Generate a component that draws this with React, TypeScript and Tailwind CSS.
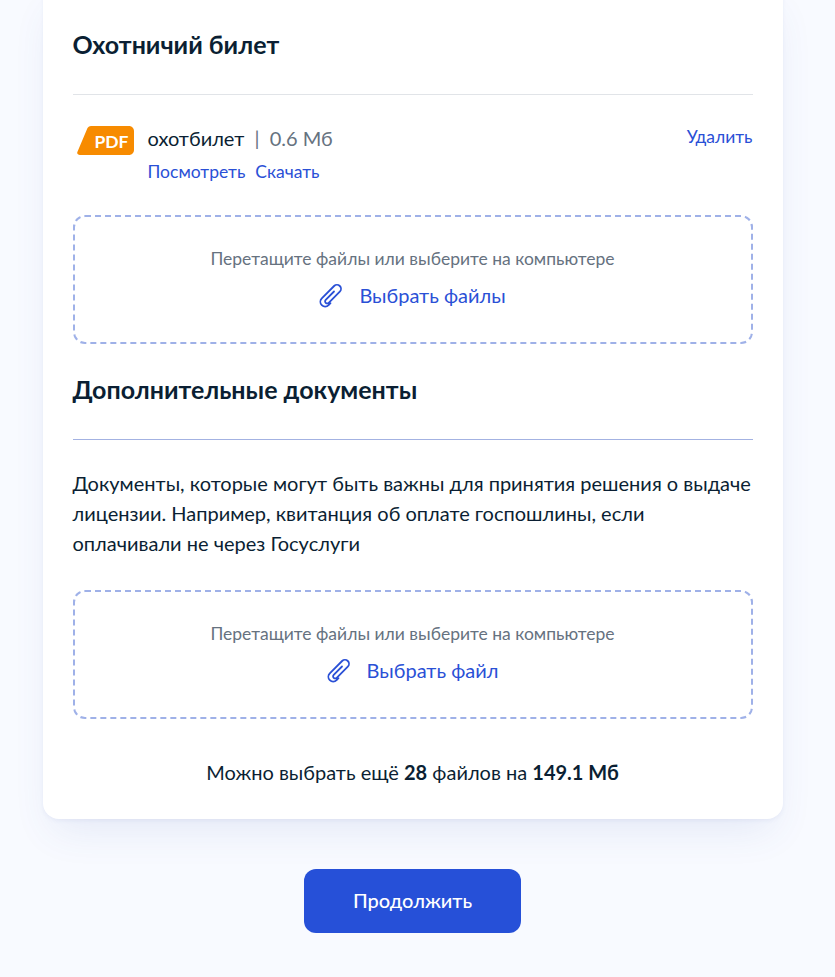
const LATO = "font-['Lato',sans-serif]";

function PaperclipIcon() {
  return (
    <svg width="24" height="25" viewBox="0 0 24 25" fill="none" className="shrink-0">
      <path
        d="M15 8.500 6.700 16.800a2.100 2.100 0 0 0 3 3L20.800 8.700a4 4 0 0 0-5.700-5.700L2.800 15.300a4.800 4.800 0 0 0 6.800 6.800L11.500 20.200"
        stroke="#2a50d6"
        strokeWidth="1.800"
        strokeLinecap="round"
        strokeLinejoin="round"
      />
    </svg>
  );
}

function PdfBadge() {
  return (
    <div className="relative h-[29px] w-[57px] shrink-0">
      <svg width="57" height="29" viewBox="0 0 57 29" className="absolute inset-0">
        <path
          d="M10.500 2C11.400.700 12.600 0 14 0h38c2.800 0 5 2.200 5 5v19c0 2.800-2.200 5-5 5H3c-2.400 0-3.500-1.800-2.300-3.800L10.500 2Z"
          fill="#f78b00"
        />
      </svg>
      <span className="absolute right-[5px] top-[5px] text-[17.500px] leading-[21px] font-bold text-white">PDF</span>
    </div>
  );
}

function DropZone({ label }: { label: string }) {
  return (
    <div className="flex h-[129px] flex-col items-center rounded-[12px] border-2 border-dashed border-[#9fb1e8] pt-[30px]">
      <p className="text-[17.5px] leading-[24px] text-[#66727f]">Перетащите файлы или выберите на компьютере</p>
      <button type="button" className="mt-[11px] flex items-center gap-[16px] text-[20px] leading-[26px] text-[#2a50d6]">
        <PaperclipIcon />
        {label}
      </button>
    </div>
  );
}

export default function App() {
  return (
    <div className={`${LATO} h-[977px] overflow-hidden bg-[#f8faff] text-[#0b1f33]`}>
      <div className="w-[825px]">
        <div className="mx-auto -mt-[16px] h-[835px] w-[740px] rounded-[16px] bg-white px-[30px] pt-[42px] shadow-[0_2px_4px_rgba(60,90,170,0.06),0_20px_40px_-10px_rgba(60,90,170,0.11)]">
          <h2 className="text-[25px] leading-[36px] font-bold">Охотничий билет</h2>
          <div className="mt-[32px] h-px bg-[#e1e4e8]" />

          <div className="mt-[31px] flex items-start justify-between">
            <div className="flex items-start gap-[14px] pl-[4px]">
              <PdfBadge />
              <div className="-mt-[2px]">
                <p className="text-[20px] leading-[28px]">
                  охотбилет <span className="mx-[5px] text-[#66727f]">|</span> <span className="text-[#66727f]">0.6 Мб</span>
                </p>
                <div className="mt-[8px] flex gap-[10px] text-[17.5px] leading-[24px] text-[#2a50d6]">
                  <a>Посмотреть</a>
                  <a>Скачать</a>
                </div>
              </div>
            </div>
            <a className="-mt-[1px] text-[17.5px] leading-[24px] text-[#2a50d6]">Удалить</a>
          </div>

          <div className="mt-[31px]">
            <DropZone label="Выбрать файлы" />
          </div>

          <h2 className="mt-[27px] text-[25px] leading-[36px] font-bold">Дополнительные документы</h2>
          <div className="mt-[32px] h-px bg-[#a3b2e2]" />
          <p className="mt-[28px] text-[20px] leading-[30px]">
            Документы, которые могут быть важны для принятия решения о выдаче
            <br />
            лицензии. Например, квитанция об оплате госпошлины, если
            <br />
            оплачивали не через Госуслуги
          </p>

          <div className="mt-[32px]">
            <DropZone label="Выбрать файл" />
          </div>

          <p className="mt-[39px] text-center text-[20px] leading-[28px]">
            Можно выбрать ещё <b>28</b> файлов на <b>149.1 Мб</b>
          </p>
        </div>

        <div className="mt-[50px] flex justify-center">
          <button type="button" className="h-[64px] w-[217px] rounded-[12px] bg-[#2650d8] pb-[3px] text-[20px] font-medium text-white">
            Продолжить
          </button>
        </div>
      </div>
    </div>
  );
}
